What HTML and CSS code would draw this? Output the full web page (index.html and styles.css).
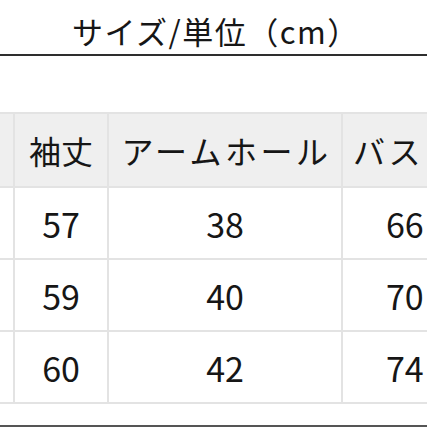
FILE: index.html
```html
<!DOCTYPE html>
<html lang="ja">
<head>
<meta charset="utf-8">
<link rel="stylesheet" href="styles.css">
</head>
<body>
<div class="page">
  <div class="title">サイズ/単位（cm）</div>
  <div class="table-wrap">
    <table class="size-table">
      <colgroup>
        <col class="c0"><col class="c1"><col class="c2"><col class="c3">
      </colgroup>
      <thead>
        <tr><th></th><th>袖丈</th><th class="wide">アームホール</th><th class="wide">バスト</th></tr>
      </thead>
      <tbody>
        <tr><td></td><td>57</td><td>38</td><td>66</td></tr>
        <tr><td></td><td>59</td><td>40</td><td>70</td></tr>
        <tr><td></td><td>60</td><td>42</td><td>74</td></tr>
      </tbody>
    </table>
  </div>
  <div class="bottom-rule"></div>
</div>
</body>
</html>
```
FILE: styles.css
```css
html, body {
  margin: 0;
  padding: 0;
  background: #ffffff;
}
body {
  font-family: "Noto Sans CJK JP", "Noto Sans", sans-serif;
  color: #161616;
  width: 427px;
  height: 427px;
  overflow: hidden;
}
.page {
  display: flex;
  flex-direction: column;
}
.title {
  height: 56px;
  box-sizing: border-box;
  padding-left: 72px;
  font-size: 31px;
  letter-spacing: 1.5px;
  line-height: 62px;
  border-bottom: 2px solid #2e2e2e;
  white-space: nowrap;
}
.table-wrap {
  margin-top: 56px;
  width: 427px;
  overflow: hidden;
}
.size-table {
  border-collapse: collapse;
  table-layout: fixed;
  width: 480px;
}
.c0 { width: 14px; }
.c1 { width: 94px; }
.c2 { width: 234px; }
.c3 { width: 138px; }
.size-table th,
.size-table td {
  border: 2px solid #e3e3e3;
  padding: 0;
  text-align: center;
  font-weight: 400;
  font-size: 34px;
  white-space: nowrap;
}
.size-table tr > :first-child {
  border-left: none;
}
.size-table th {
  background: #efefef;
  height: 72px;
  font-size: 32px;
}
.size-table th.wide {
  letter-spacing: 3.5px;
}
.size-table th.wide:nth-child(3) {
  text-indent: 3px;
}
.size-table td {
  height: 70px;
}
.size-table td:nth-child(4),
.size-table th:nth-child(4) {
  text-align: left;
  padding-left: 10px;
}
.size-table td:nth-child(4) {
  padding-left: 43px;
}
.bottom-rule {
  margin-top: 21px;
  height: 2px;
  background: #555555;
}
```
